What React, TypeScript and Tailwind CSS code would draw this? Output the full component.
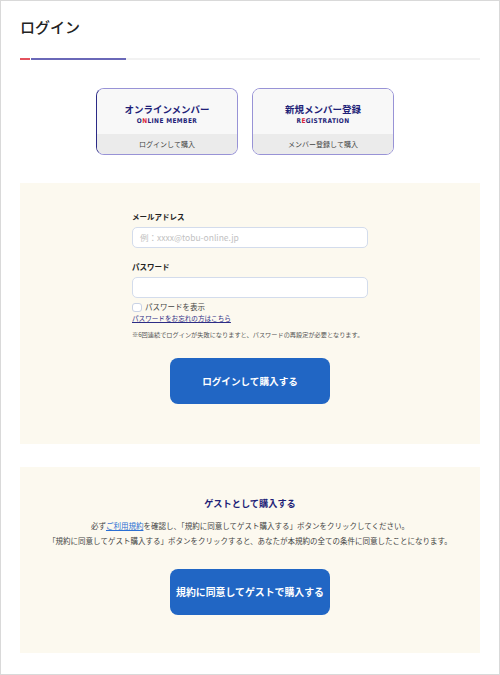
import type React from "react"

const font = { fontFamily: '"Noto Sans CJK JP", "Noto Sans", sans-serif' }

const MemberCard: React.FC<{
  title: string
  en: string
  footer: string
  active?: boolean
}> = ({ title, en, footer, active }) => (
  <div
    className={`w-[142px] h-[67px] rounded-[8px] border border-[#9893d6] overflow-hidden flex flex-col ${
      active ? "border-l-[#2b2a86]" : ""
    }`}
  >
    <div className="flex-1 bg-[#f8f8f8] flex flex-col items-center pt-[13px]">
      <div className="text-[9.5px] leading-[14px] font-bold text-[#1f1f78]">{title}</div>
      <div
        className="text-[6.5px] leading-[10px] font-bold tracking-[0.4px] text-[#1f1f78]"
        style={{ fontFamily: '"DejaVu Sans Condensed", "Liberation Sans Narrow", sans-serif' }}
      >
        {en[0]}
        <span className="text-[#d9263c]">{en[1]}</span>
        {en.slice(2)}
      </div>
    </div>
    <div className="h-[20px] bg-[#ebebeb] flex items-center justify-center text-[7px] text-[#444]">
      {footer}
    </div>
  </div>
)

export default function App() {
  return (
    <div className="w-[500px] h-[675px] border border-[#d9d9d9] bg-white text-[#333]" style={font}>
      <div className="px-[19px]">
        {/* Header */}
        <h1 className="pt-[16px] text-[15px] leading-[20px] font-medium text-[#222]">ログイン</h1>
        <div className="mt-[21px] flex h-[2px]">
          <div className="w-[10px] bg-[#e4525e]" />
          <div className="w-[95px] ml-px bg-[#6a68b8]" />
          <div className="flex-1 bg-[#f2f2f2]" />
        </div>

        {/* Member cards */}
        <div className="mt-[28px] flex justify-center gap-[14px] pr-[10px]">
          <MemberCard title="オンラインメンバー" en="ONLINE MEMBER" footer="ログインして購入" active />
          <MemberCard title="新規メンバー登録" en="REGISTRATION" footer="メンバー登録して購入" />
        </div>

        {/* Login form */}
        <section className="mt-[28px] bg-[#fcf9ef] pt-[28px] pb-[40px]">
          <div className="w-[236px] mx-auto">
            <label className="block text-[7.5px] leading-[12px] font-bold text-[#222] mb-[4px]">
              メールアドレス
            </label>
            <div className="h-[21px] rounded-[5px] border border-[#d3dcec] bg-white px-[7px] flex items-center text-[8.5px] text-[#c2c2c2]">
              例：xxxx@tobu-online.jp
            </div>
            <label className="block mt-[13px] text-[7.5px] leading-[12px] font-bold text-[#222] mb-[4px]">
              パスワード
            </label>
            <div className="h-[21px] rounded-[5px] border border-[#d3dcec] bg-white" />
            <div className="mt-[3px] h-[12px] flex items-center gap-[3px]">
              <span className="w-[10px] h-[9px] rounded-[3px] border border-[#c9d2e4] bg-white" />
              <span className="text-[7.5px] text-[#444]">パスワードを表示</span>
            </div>
            <div className="h-[12px] flex items-center">
              <span className="text-[6.6px] text-[#2d2d86] underline">パスワードをお忘れの方はこちら</span>
            </div>
            <div className="mt-[4px] h-[12px] flex items-center whitespace-nowrap text-[6.2px] text-[#555]">
              ※6回連続でログインが失敗になりますと、パスワードの再設定が必要となります。
            </div>
          </div>
          <div className="mt-[17px] flex justify-center">
            <button className="w-[160px] h-[46px] rounded-[8px] bg-[#2166c4] text-white text-[9.6px] font-bold">
              ログインして購入する
            </button>
          </div>
        </section>

        {/* Guest */}
        <section className="mt-[23px] bg-[#fcf9ef] pt-[29px] pb-[38px] flex flex-col items-center">
          <h2 className="text-[9.2px] leading-[14px] font-bold text-[#1f1f78]">ゲストとして購入する</h2>
          <p className="mt-[8px] text-[7.5px] leading-[15px] text-[#444] text-center whitespace-nowrap">
            必ず<span className="text-[#2b6fd3] underline">ご利用規約</span>
            を確認し、「規約に同意してゲスト購入する」ボタンをクリックしてください。
            <br />
            「規約に同意してゲスト購入する」ボタンをクリックすると、あなたが本規約の全ての条件に同意したことになります。
          </p>
          <button className="mt-[21px] w-[160px] h-[46px] rounded-[8px] bg-[#2166c4] text-white text-[9.9px] font-bold">
            規約に同意してゲストで購入する
          </button>
        </section>
      </div>
    </div>
  )
}
